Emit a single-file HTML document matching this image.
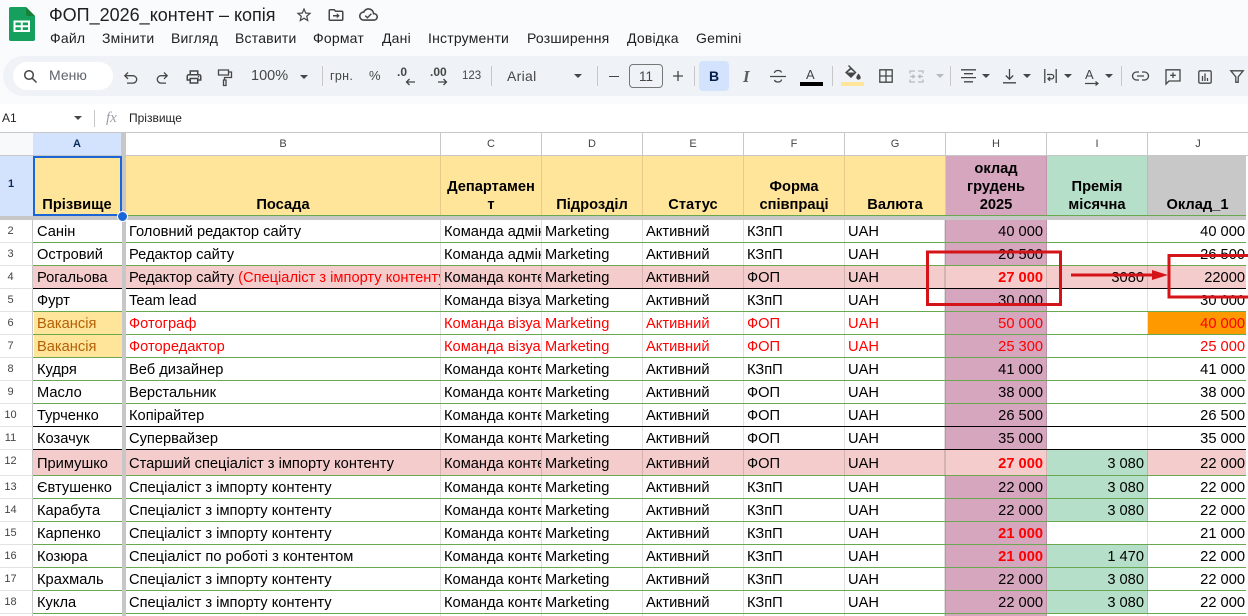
<!DOCTYPE html>
<html lang="uk"><head><meta charset="utf-8"><title>ФОП_2026_контент – копія</title>
<style>
html,body{margin:0;padding:0;width:1248px;height:616px;overflow:hidden;background:#fff;font-family:"Liberation Sans","Noto Sans CJK SC",sans-serif;color:#000}
#w{position:relative;width:1248px;height:616px;overflow:hidden;background:#fff}
#top{position:absolute;left:0;top:0;width:1248px;height:104px;background:#f9fbfd}
#tb{position:absolute;left:3px;top:56px;width:1245px;height:40px;background:#eff3f8;border-radius:20px 0 0 20px}
.t{position:absolute;white-space:nowrap;color:#444746}
.m{position:absolute;top:30px;font-size:14px;line-height:16px;color:#1f1f1f;white-space:nowrap;letter-spacing:.2px}
.sep{position:absolute;top:66px;width:1px;height:20px;background:#c7c7c7}
svg{position:absolute;overflow:visible}
.car{position:absolute;width:0;height:0;border-left:4.5px solid transparent;border-right:4.5px solid transparent;border-top:4.5px solid #444746}
.r{position:absolute;left:33px;width:1215px;height:23px;box-sizing:border-box;border-bottom:1px solid #6aa84f}
.k{border-bottom-color:#000}
.p{background:#f4cccc}
.r>span{position:absolute;top:0;bottom:0;box-sizing:border-box;padding:0 3px;font-size:14.67px;line-height:24px;white-space:nowrap;overflow:hidden;border-right:1px solid rgba(0,0,0,.12)}
.tall>span{line-height:29px!important}
.a{left:1px;width:89px}.b{left:93px;width:315px}.c{left:408px;width:101px}.d{left:509px;width:101px}.e{left:610px;width:101px}.f{left:711px;width:101px}.g{left:812px;width:100px}
.r>.h{left:912px;width:102px;text-align:right;background:#d5a6bd;border-left:1px solid rgba(0,0,0,.12)}
.r>.i{left:1014px;width:101px;text-align:right}.r>.j{left:1115px;width:100px;text-align:right;border-right:0}
.p>.h{background:#f4cccc!important}
.gr{background:#b6dfca}
.x>span{color:#f00}
.v{background:#ffe599;color:#b45f06!important}
.q{color:#f00;font-weight:bold}
.n{position:absolute;left:0;width:33px;box-sizing:border-box;border-bottom:1px solid #e3e3e3;border-right:1px solid #c7c7c7;background:#fff;font-size:11px;color:#444;padding-right:11px;text-align:center;line-height:22px;height:23px}
.ch{position:absolute;top:133px;height:23px;box-sizing:border-box;border-right:1px solid #c7c7c7;border-bottom:1px solid #c7c7c7;background:#fff;font-size:11px;line-height:23px;text-align:center;color:#444}
.hc{position:absolute;top:156px;height:59px;box-sizing:border-box;background:#ffe599;border-right:1px solid rgba(0,0,0,.1);font-size:14.67px;font-weight:bold;line-height:18px;text-align:center;display:flex;flex-direction:column;justify-content:flex-end;padding:0 3px 1px;white-space:nowrap}
</style></head><body><div id="w">
<div id="top"></div><div id="tb"></div>

<svg style="left:9px;top:7px" width="26" height="34" viewBox="0 0 26 34"><path d="M2 0H17L26 9V32a2 2 0 0 1-2 2H2a2 2 0 0 1-2-2V2A2 2 0 0 1 2 0Z" fill="#16a05d"/><path d="M17 0L26 9H19a2 2 0 0 1-2-2Z" fill="#188038"/><path d="M4.500 13.500H21V25H4.500ZM6.500 15.500V18.300H11.800V15.500ZM13.700 15.500V18.300H19V15.500ZM6.500 20.200V23H11.800V20.200ZM13.700 20.200V23H19V20.200Z" fill="#fff" fill-rule="evenodd"/></svg>
<div class="t" style="left:49px;top:4px;font-size:18px;line-height:22px;color:#1f1f1f">ФОП_2026_контент – копія</div>
<svg style="left:295px;top:6px" width="18" height="18" viewBox="0 0 24 24" fill="#444746"><path d="M22 9.24l-7.19-.62L12 2 9.19 8.63 2 9.24l5.46 4.73L5.82 21 12 17.27 18.18 21l-1.63-7.03L22 9.24zM12 15.4l-3.76 2.27 1-4.28-3.32-2.88 4.38-.38L12 6.1l1.71 4.04 4.38.38-3.32 2.88 1 4.28L12 15.4z"/></svg>
<svg style="left:327px;top:6px" width="18" height="18" viewBox="0 0 24 24" fill="#444746"><path d="M20 6h-8l-2-2H4c-1.1 0-2 .9-2 2v12c0 1.1.9 2 2 2h16c1.1 0 2-.9 2-2V8c0-1.1-.9-2-2-2zm0 12H4V6h5.17l2 2H20v10z"/><path d="M8 12h5V9.500l4 3.500-4 3.500V14H8z"/></svg>
<svg style="left:359px;top:5px" width="19" height="19" viewBox="0 0 24 24" fill="#444746"><path d="M19.35 10.04C18.67 6.59 15.64 4 12 4 9.11 4 6.6 5.64 5.35 8.04 2.34 8.36 0 10.91 0 14c0 3.31 2.69 6 6 6h13c2.76 0 5-2.24 5-5 0-2.640-2.05-4.78-4.65-4.96zM19 18H6c-2.21 0-4-1.79-4-4s1.79-4 4-4h.71C7.370 7.69 9.48 6 12 6c3.04 0 5.5 2.46 5.5 5.5v.5H19c1.66 0 3 1.34 3 3s-1.34 3-3 3z"/><path d="M8 13.500l2.600 2.600 5-5" fill="none" stroke="#444746" stroke-width="1.800"/></svg>

<div class="m" style="left:50px">Файл</div><div class="m" style="left:102px">Змінити</div><div class="m" style="left:171px">Вигляд</div><div class="m" style="left:235px">Вставити</div><div class="m" style="left:313px">Формат</div><div class="m" style="left:382px">Дані</div><div class="m" style="left:428px">Інструменти</div><div class="m" style="left:527px">Розширення</div><div class="m" style="left:627px">Довідка</div><div class="m" style="left:696px">Gemini</div>

<div style="position:absolute;left:13px;top:62px;width:100px;height:28px;border-radius:14px;background:#fff"></div>
<svg style="left:23px;top:69px" width="15" height="15" viewBox="0 0 15 15" fill="none" stroke="#444746" stroke-width="1.500"><circle cx="6" cy="6" r="4.300"/><path d="M9.200 9.200L13.500 13.500"/></svg>
<div class="t" style="left:49px;top:67px;font-size:14px;line-height:17px;color:#5f6368">Меню</div>

<svg style="left:122px;top:70px" width="18" height="16" viewBox="0 0 18 16" fill="none" stroke="#444746" stroke-width="1.300"><path d="M6 2.500L2.800 5.700 6 8.900M3 5.700H11a3.700 3.700 0 0 1 0 7.400H5"/></svg>
<svg style="left:154px;top:70px" width="18" height="16" viewBox="0 0 18 16" fill="none" stroke="#444746" stroke-width="1.300"><path d="M10 2.500L13.200 5.700 10 8.900M13 5.700H7a3.700 3.700 0 0 0 0 7.400H12"/></svg>
<svg style="left:185px;top:68px" width="18" height="18" viewBox="0 0 24 24" fill="#444746"><path d="M19 8h-1V3H6v5H5c-1.660 0-3 1.340-3 3v6h4v4h12v-4h4v-6c0-1.660-1.340-3-3-3zM8 5h8v3H8V5zm8 12v2H8v-4h8v2zm2-2v-2H6v2H4v-4c0-.55.45-1 1-1h14c.55 0 1 .45 1 1v4h-2z"/><circle cx="18" cy="11.500" r="1"/></svg>
<svg style="left:217px;top:68px" width="16" height="19" viewBox="0 0 16 19" fill="none" stroke="#444746" stroke-width="1.300"><path d="M1.500 2H11.500V7H1.500ZM11.500 4H14.500V9.500H7.500V12M6.500 12H9V17.500H6.500Z"/></svg>
<div class="t" style="left:251px;top:68px;font-size:14.500px;line-height:17px">100%</div><div class="car" style="left:300px;top:75px"></div>
<div class="sep" style="left:322px"></div>
<div class="t" style="left:330px;top:68px;font-size:12.500px;line-height:16px;letter-spacing:.3px">грн.</div><div class="t" style="left:369px;top:68px;font-size:13px;line-height:16px">%</div>
<div class="t" style="left:397px;top:65px;font-size:12px;line-height:14px;font-weight:bold">.0</div><svg style="left:405px;top:78px" width="11" height="8" viewBox="0 0 11 8" fill="none" stroke="#444746" stroke-width="1.300"><path d="M10 4H2M4.500 1L1.500 4 4.500 7"/></svg>
<div class="t" style="left:430px;top:65px;font-size:12px;line-height:14px;font-weight:bold">.00</div><svg style="left:437px;top:78px" width="11" height="8" viewBox="0 0 11 8" fill="none" stroke="#444746" stroke-width="1.300"><path d="M1 4H9M6.500 1L9.500 4 6.500 7"/></svg>
<div class="t" style="left:462px;top:69px;font-size:11.500px;line-height:14px">123</div>
<div class="sep" style="left:491px"></div>
<div class="t" style="left:507px;top:68px;font-size:14px;line-height:16px;letter-spacing:.3px">Arial</div><div class="car" style="left:574px;top:74px"></div>
<div class="sep" style="left:597px"></div>
<div style="position:absolute;left:609px;top:75.500px;width:10px;height:1.200px;background:#444746"></div>
<div style="position:absolute;left:629px;top:64px;width:34px;height:24px;box-sizing:border-box;border:1px solid #747775;border-radius:4px;font-size:13.500px;line-height:23px;text-align:center;color:#444746">11</div>
<svg style="left:672px;top:70px" width="12" height="12" viewBox="0 0 12 12" stroke="#444746" stroke-width="1.300"><path d="M1 6H11M6 1V11"/></svg>
<div class="sep" style="left:694px"></div>
<div style="position:absolute;left:699px;top:61px;width:30px;height:30px;border-radius:4px;background:#d3e3fd;color:#041e49;font-size:14px;font-weight:bold;line-height:30px;text-align:center">B</div>
<div style="position:absolute;left:743px;top:68px;width:10px;font-family:'Liberation Serif',serif;font-size:17px;line-height:18px;font-style:italic;font-weight:bold;color:#5a5d5c">I</div>
<svg style="left:770px;top:69px" width="16" height="15" viewBox="0 0 16 15" fill="none" stroke="#444746" stroke-width="1.300"><path d="M0 7.500H16M11.500 3.500C11 2 9.500 1.500 8 1.500S4.500 2.200 4.500 4M4.500 11c.5 1.500 2 2 3.500 2s3.500-.7 3.500-2.500"/></svg>
<div class="t" style="left:806px;top:67px;font-size:13px;line-height:15px">A</div><div style="position:absolute;left:800px;top:82px;width:23px;height:4px;background:#000"></div>
<div class="sep" style="left:832px"></div>
<svg style="left:844px;top:65px" width="18" height="16" viewBox="0 0 18 16" fill="#444746"><path d="M4 1L5 0 12.500 7.500 7 13 1 7.500 6 3 4 1ZM7 4.500L3.400 7.500H10.600Z" fill-rule="evenodd"/><path d="M14.500 8.500s2.200 2.500 2.200 4a2.200 2.200 0 0 1-4.400 0c0-1.500 2.200-4 2.200-4Z"/></svg>
<div style="position:absolute;left:841px;top:82px;width:23px;height:4px;background:#ffe599"></div>
<svg style="left:879px;top:69px" width="14" height="14" viewBox="0 0 14 14" fill="none" stroke="#444746" stroke-width="1.300"><path d="M.8.800H13.200V13.200H.8ZM7 .8V13.200M.8 7H13.200"/></svg>
<svg style="left:909px;top:70px" width="15" height="13" viewBox="0 0 15 13" fill="none" stroke="#b8bbbd" stroke-width="1.300"><path d="M6 1H1V3.500M1 9.500V12H6M9 1H14V3.500M14 9.500V12H9M1 6.500H5M3.500 4.700L5.500 6.500 3.500 8.300M14 6.500H10M11.500 4.700L9.500 6.500 11.500 8.300"/></svg>
<div class="car" style="left:936px;top:74px;border-top-color:#b8bbbd"></div>
<div class="sep" style="left:950px"></div>
<svg style="left:961px;top:69px" width="15" height="14" viewBox="0 0 15 14" stroke="#444746" stroke-width="1.300"><path d="M0 .8H15M3 4.700H12M0 8.600H15M3 12.800H12"/></svg><div class="car" style="left:982px;top:74px"></div>
<svg style="left:1003px;top:69px" width="13" height="15" viewBox="0 0 13 15" fill="none" stroke="#444746" stroke-width="1.300"><path d="M6.500 0V10M2.800 6.500L6.500 10.200 10.200 6.500M0 13.800H13"/></svg><div class="car" style="left:1023px;top:74px"></div>
<svg style="left:1044px;top:69px" width="13" height="14" viewBox="0 0 13 14" fill="none" stroke="#444746" stroke-width="1.300"><path d="M.8 0V14M12.200 0V14M3 5.500H7.500a2.200 2.200 0 0 1 0 4.400H4.500M6 8L4 9.900 6 11.800"/></svg><div class="car" style="left:1064px;top:74px"></div>
<div class="t" style="left:1085px;top:68px;font-size:13px;line-height:14px">A</div><svg style="left:1085px;top:81px" width="14" height="5" viewBox="0 0 14 5" fill="none" stroke="#444746" stroke-width="1.200"><path d="M0 2.500H13M10.500.5L13 2.500 10.500 4.500"/></svg><div class="car" style="left:1105px;top:74px"></div>
<div class="sep" style="left:1121px"></div>
<svg style="left:1132px;top:71px" width="17" height="10" viewBox="0 0 17 10" fill="none" stroke="#444746" stroke-width="1.300"><path d="M7 1H4.500a4 4 0 0 0 0 8H7M10 1H12.500a4 4 0 0 1 0 8H10M5 5H12"/></svg>
<svg style="left:1165px;top:69px" width="16" height="16" viewBox="0 0 16 16" fill="none" stroke="#444746" stroke-width="1.300"><path d="M1 .8H15V12H4L1 15ZM8 3.500V9M5.200 6.300H10.800"/></svg>
<svg style="left:1198px;top:70px" width="14" height="14" viewBox="0 0 14 14" fill="none" stroke="#444746" stroke-width="1.300"><path d="M2 .8H12a1.200 1.200 0 0 1 1.200 1.200V12A1.200 1.200 0 0 1 12 13.200H2A1.200 1.200 0 0 1 .8 12V2A1.200 1.200 0 0 1 2 .8ZM4.500 6V11M7 3.500V11M9.500 8V11"/></svg>
<svg style="left:1230px;top:70px" width="14" height="13" viewBox="0 0 14 13" fill="none" stroke="#444746" stroke-width="1.300"><path d="M.8.800H13.200L8.200 6.800V12.200H5.800V6.800Z"/></svg>

<div class="t" style="left:2px;top:111px;font-size:12px;line-height:14px;color:#1f1f1f">A1</div><div class="car" style="left:74px;top:116px"></div>
<div style="position:absolute;left:94px;top:110px;width:1px;height:17px;background:#c7c7c7"></div>
<div class="t" style="left:106px;top:109px;font-family:'Liberation Serif',serif;font-style:italic;font-size:15px;line-height:18px;color:#9aa0a6">fx</div>
<div class="t" style="left:129px;top:111px;font-size:12px;line-height:14px;color:#1f1f1f">Прізвище</div>

<div style="position:absolute;left:0;top:132px;width:1248px;height:1px;background:#c7c7c7"></div>
<div class="ch" style="left:0;width:34px;background:#f8f9fa"></div>
<div class="ch" style="left:33px;width:89px;background:#d3e3fd;font-weight:bold;color:#0b2a5c">A</div>
<div class="ch" style="left:126px;width:315px">B</div><div class="ch" style="left:441px;width:101px">C</div><div class="ch" style="left:542px;width:101px">D</div><div class="ch" style="left:643px;width:101px">E</div><div class="ch" style="left:744px;width:101px">F</div><div class="ch" style="left:845px;width:101px">G</div><div class="ch" style="left:946px;width:101px">H</div><div class="ch" style="left:1047px;width:101px">I</div><div class="ch" style="left:1148px;width:100px;border-right:0">J</div>

<div style="position:absolute;left:0;top:156px;width:33px;height:60px;background:#d3e3fd;font-size:11px;font-weight:bold;color:#0b2a5c;line-height:57px;text-align:center;padding-right:11px;box-sizing:border-box">1</div>
<div class="hc" style="left:33px;width:89px">Прізвище</div>
<div class="hc" style="left:126px;width:315px">Посада</div>
<div class="hc" style="left:441px;width:101px"><div>Департамен<br>т</div></div>
<div class="hc" style="left:542px;width:101px">Підрозділ</div>
<div class="hc" style="left:643px;width:101px">Статус</div>
<div class="hc" style="left:744px;width:101px"><div>Форма<br>співпраці</div></div>
<div class="hc" style="left:845px;width:101px">Валюта</div>
<div class="hc" style="left:946px;width:101px;background:#d5a6bd"><div>оклад<br>грудень<br>2025</div></div>
<div class="hc" style="left:1047px;width:101px;background:#b6dfca"><div>Премія<br>місячна</div></div>
<div class="hc" style="left:1148px;width:100px;background:#c8c8c8">Оклад_1</div>
<div style="position:absolute;left:33px;top:215px;width:1215px;height:1px;background:#6aa84f"></div>

<div class="n" style="top:220px">2</div><div class="n" style="top:243px">3</div><div class="n" style="top:266px">4</div><div class="n" style="top:289px">5</div><div class="n" style="top:312px">6</div><div class="n" style="top:335px">7</div><div class="n" style="top:358px">8</div><div class="n" style="top:381px">9</div><div class="n" style="top:404px">10</div><div class="n" style="top:427px">11</div><div class="n" style="top:450px;height:26px">12</div><div class="n" style="top:476px">13</div><div class="n" style="top:499px">14</div><div class="n" style="top:522px">15</div><div class="n" style="top:545px">16</div><div class="n" style="top:568px">17</div><div class="n" style="top:591px">18</div><div class="n" style="top:614px"></div>

<div class="r" style="top:220px"><span class="a">Санін</span><span class="b">Головний редактор сайту</span><span class="c">Команда адміністрації</span><span class="d">Marketing</span><span class="e">Активний</span><span class="f">КЗпП</span><span class="g">UAH</span><span class="h">40 000</span><span class="i"></span><span class="j">40 000</span></div>
<div class="r" style="top:243px"><span class="a">Островий</span><span class="b">Редактор сайту</span><span class="c">Команда адміністрації</span><span class="d">Marketing</span><span class="e">Активний</span><span class="f">КЗпП</span><span class="g">UAH</span><span class="h">26 500</span><span class="i"></span><span class="j">26 500</span></div>
<div class="r p k" style="top:266px"><span class="a">Рогальова</span><span class="b">Редактор сайту <font color="#ff0000">(Спеціаліст з імпорту контенту)</font></span><span class="c">Команда контенту</span><span class="d">Marketing</span><span class="e">Активний</span><span class="f">ФОП</span><span class="g">UAH</span><span class="h q">27 000</span><span class="i">3080</span><span class="j">22000</span></div>
<div class="r" style="top:289px"><span class="a">Фурт</span><span class="b">Team lead</span><span class="c">Команда візуалу</span><span class="d">Marketing</span><span class="e">Активний</span><span class="f">КЗпП</span><span class="g">UAH</span><span class="h">30 000</span><span class="i"></span><span class="j">30 000</span></div>
<div class="r x" style="top:312px"><span class="a v">Вакансія</span><span class="b">Фотограф</span><span class="c">Команда візуалу</span><span class="d">Marketing</span><span class="e">Активний</span><span class="f">ФОП</span><span class="g">UAH</span><span class="h">50 000</span><span class="i"></span><span class="j" style="background:#ff9900">40 000</span></div>
<div class="r x" style="top:335px"><span class="a v">Вакансія</span><span class="b">Фоторедактор</span><span class="c">Команда візуалу</span><span class="d">Marketing</span><span class="e">Активний</span><span class="f">ФОП</span><span class="g">UAH</span><span class="h">25 300</span><span class="i"></span><span class="j">25 000</span></div>
<div class="r" style="top:358px"><span class="a">Кудря</span><span class="b">Веб дизайнер</span><span class="c">Команда контенту</span><span class="d">Marketing</span><span class="e">Активний</span><span class="f">КЗпП</span><span class="g">UAH</span><span class="h">41 000</span><span class="i"></span><span class="j">41 000</span></div>
<div class="r" style="top:381px"><span class="a">Масло</span><span class="b">Верстальник</span><span class="c">Команда контенту</span><span class="d">Marketing</span><span class="e">Активний</span><span class="f">ФОП</span><span class="g">UAH</span><span class="h">38 000</span><span class="i"></span><span class="j">38 000</span></div>
<div class="r k" style="top:404px"><span class="a">Турченко</span><span class="b">Копірайтер</span><span class="c">Команда контенту</span><span class="d">Marketing</span><span class="e">Активний</span><span class="f">ФОП</span><span class="g">UAH</span><span class="h">26 500</span><span class="i"></span><span class="j">26 500</span></div>
<div class="r k" style="top:427px"><span class="a">Козачук</span><span class="b">Супервайзер</span><span class="c">Команда контенту</span><span class="d">Marketing</span><span class="e">Активний</span><span class="f">ФОП</span><span class="g">UAH</span><span class="h">35 000</span><span class="i"></span><span class="j">35 000</span></div>
<div class="r p tall" style="top:450px;height:26px"><span class="a">Примушко</span><span class="b">Старший спеціаліст з імпорту контенту</span><span class="c">Команда контенту</span><span class="d">Marketing</span><span class="e">Активний</span><span class="f">ФОП</span><span class="g">UAH</span><span class="h q">27 000</span><span class="i gr">3 080</span><span class="j">22 000</span></div>
<div class="r" style="top:476px"><span class="a">Євтушенко</span><span class="b">Спеціаліст з імпорту контенту</span><span class="c">Команда контенту</span><span class="d">Marketing</span><span class="e">Активний</span><span class="f">КЗпП</span><span class="g">UAH</span><span class="h">22 000</span><span class="i gr">3 080</span><span class="j">22 000</span></div>
<div class="r" style="top:499px"><span class="a">Карабута</span><span class="b">Спеціаліст з імпорту контенту</span><span class="c">Команда контенту</span><span class="d">Marketing</span><span class="e">Активний</span><span class="f">КЗпП</span><span class="g">UAH</span><span class="h">22 000</span><span class="i gr">3 080</span><span class="j">22 000</span></div>
<div class="r" style="top:522px"><span class="a">Карпенко</span><span class="b">Спеціаліст з імпорту контенту</span><span class="c">Команда контенту</span><span class="d">Marketing</span><span class="e">Активний</span><span class="f">КЗпП</span><span class="g">UAH</span><span class="h q">21 000</span><span class="i"></span><span class="j">21 000</span></div>
<div class="r" style="top:545px"><span class="a">Козюра</span><span class="b">Спеціаліст по роботі з контентом</span><span class="c">Команда контенту</span><span class="d">Marketing</span><span class="e">Активний</span><span class="f">КЗпП</span><span class="g">UAH</span><span class="h q">21 000</span><span class="i gr">1 470</span><span class="j">22 000</span></div>
<div class="r" style="top:568px"><span class="a">Крахмаль</span><span class="b">Спеціаліст з імпорту контенту</span><span class="c">Команда контенту</span><span class="d">Marketing</span><span class="e">Активний</span><span class="f">КЗпП</span><span class="g">UAH</span><span class="h">22 000</span><span class="i gr">3 080</span><span class="j">22 000</span></div>
<div class="r" style="top:591px"><span class="a">Кукла</span><span class="b">Спеціаліст з імпорту контенту</span><span class="c">Команда контенту</span><span class="d">Marketing</span><span class="e">Активний</span><span class="f">КЗпП</span><span class="g">UAH</span><span class="h">22 000</span><span class="i gr">3 080</span><span class="j">22 000</span></div>
<div class="r" style="top:614px"><span class="a"></span><span class="b"></span><span class="c"></span><span class="d"></span><span class="e"></span><span class="f"></span><span class="g"></span><span class="h"></span><span class="i"></span><span class="j"></span></div>

<div style="position:absolute;left:122px;top:133px;width:4px;height:483px;background:#c7c7c7"></div>
<div style="position:absolute;left:0;top:216px;width:1246px;height:4px;background:#c7c7c7"></div>
<div style="position:absolute;left:1246px;top:156px;width:2px;height:460px;background:#fff"></div>
<div style="position:absolute;left:33px;top:156px;width:89px;height:60px;box-sizing:border-box;border:2px solid #1a66d6"></div>
<div style="position:absolute;left:117px;top:211px;width:9px;height:9px;border-radius:50%;background:#1a66d6;border:1px solid #fff;box-sizing:content-box;margin:-.5px"></div>

<svg style="left:0;top:0" width="1248" height="616" viewBox="0 0 1248 616" fill="none"><g stroke="#d5141a" stroke-width="3"><path d="M927.500 252H1060.500V304.500H927.500Z"/><path d="M1250 255.500H1169V297H1250"/><path d="M1071 275H1156"/></g><path d="M1152 270L1168 275 1152 280Z" fill="#d5141a"/></svg>
</div></body></html>
